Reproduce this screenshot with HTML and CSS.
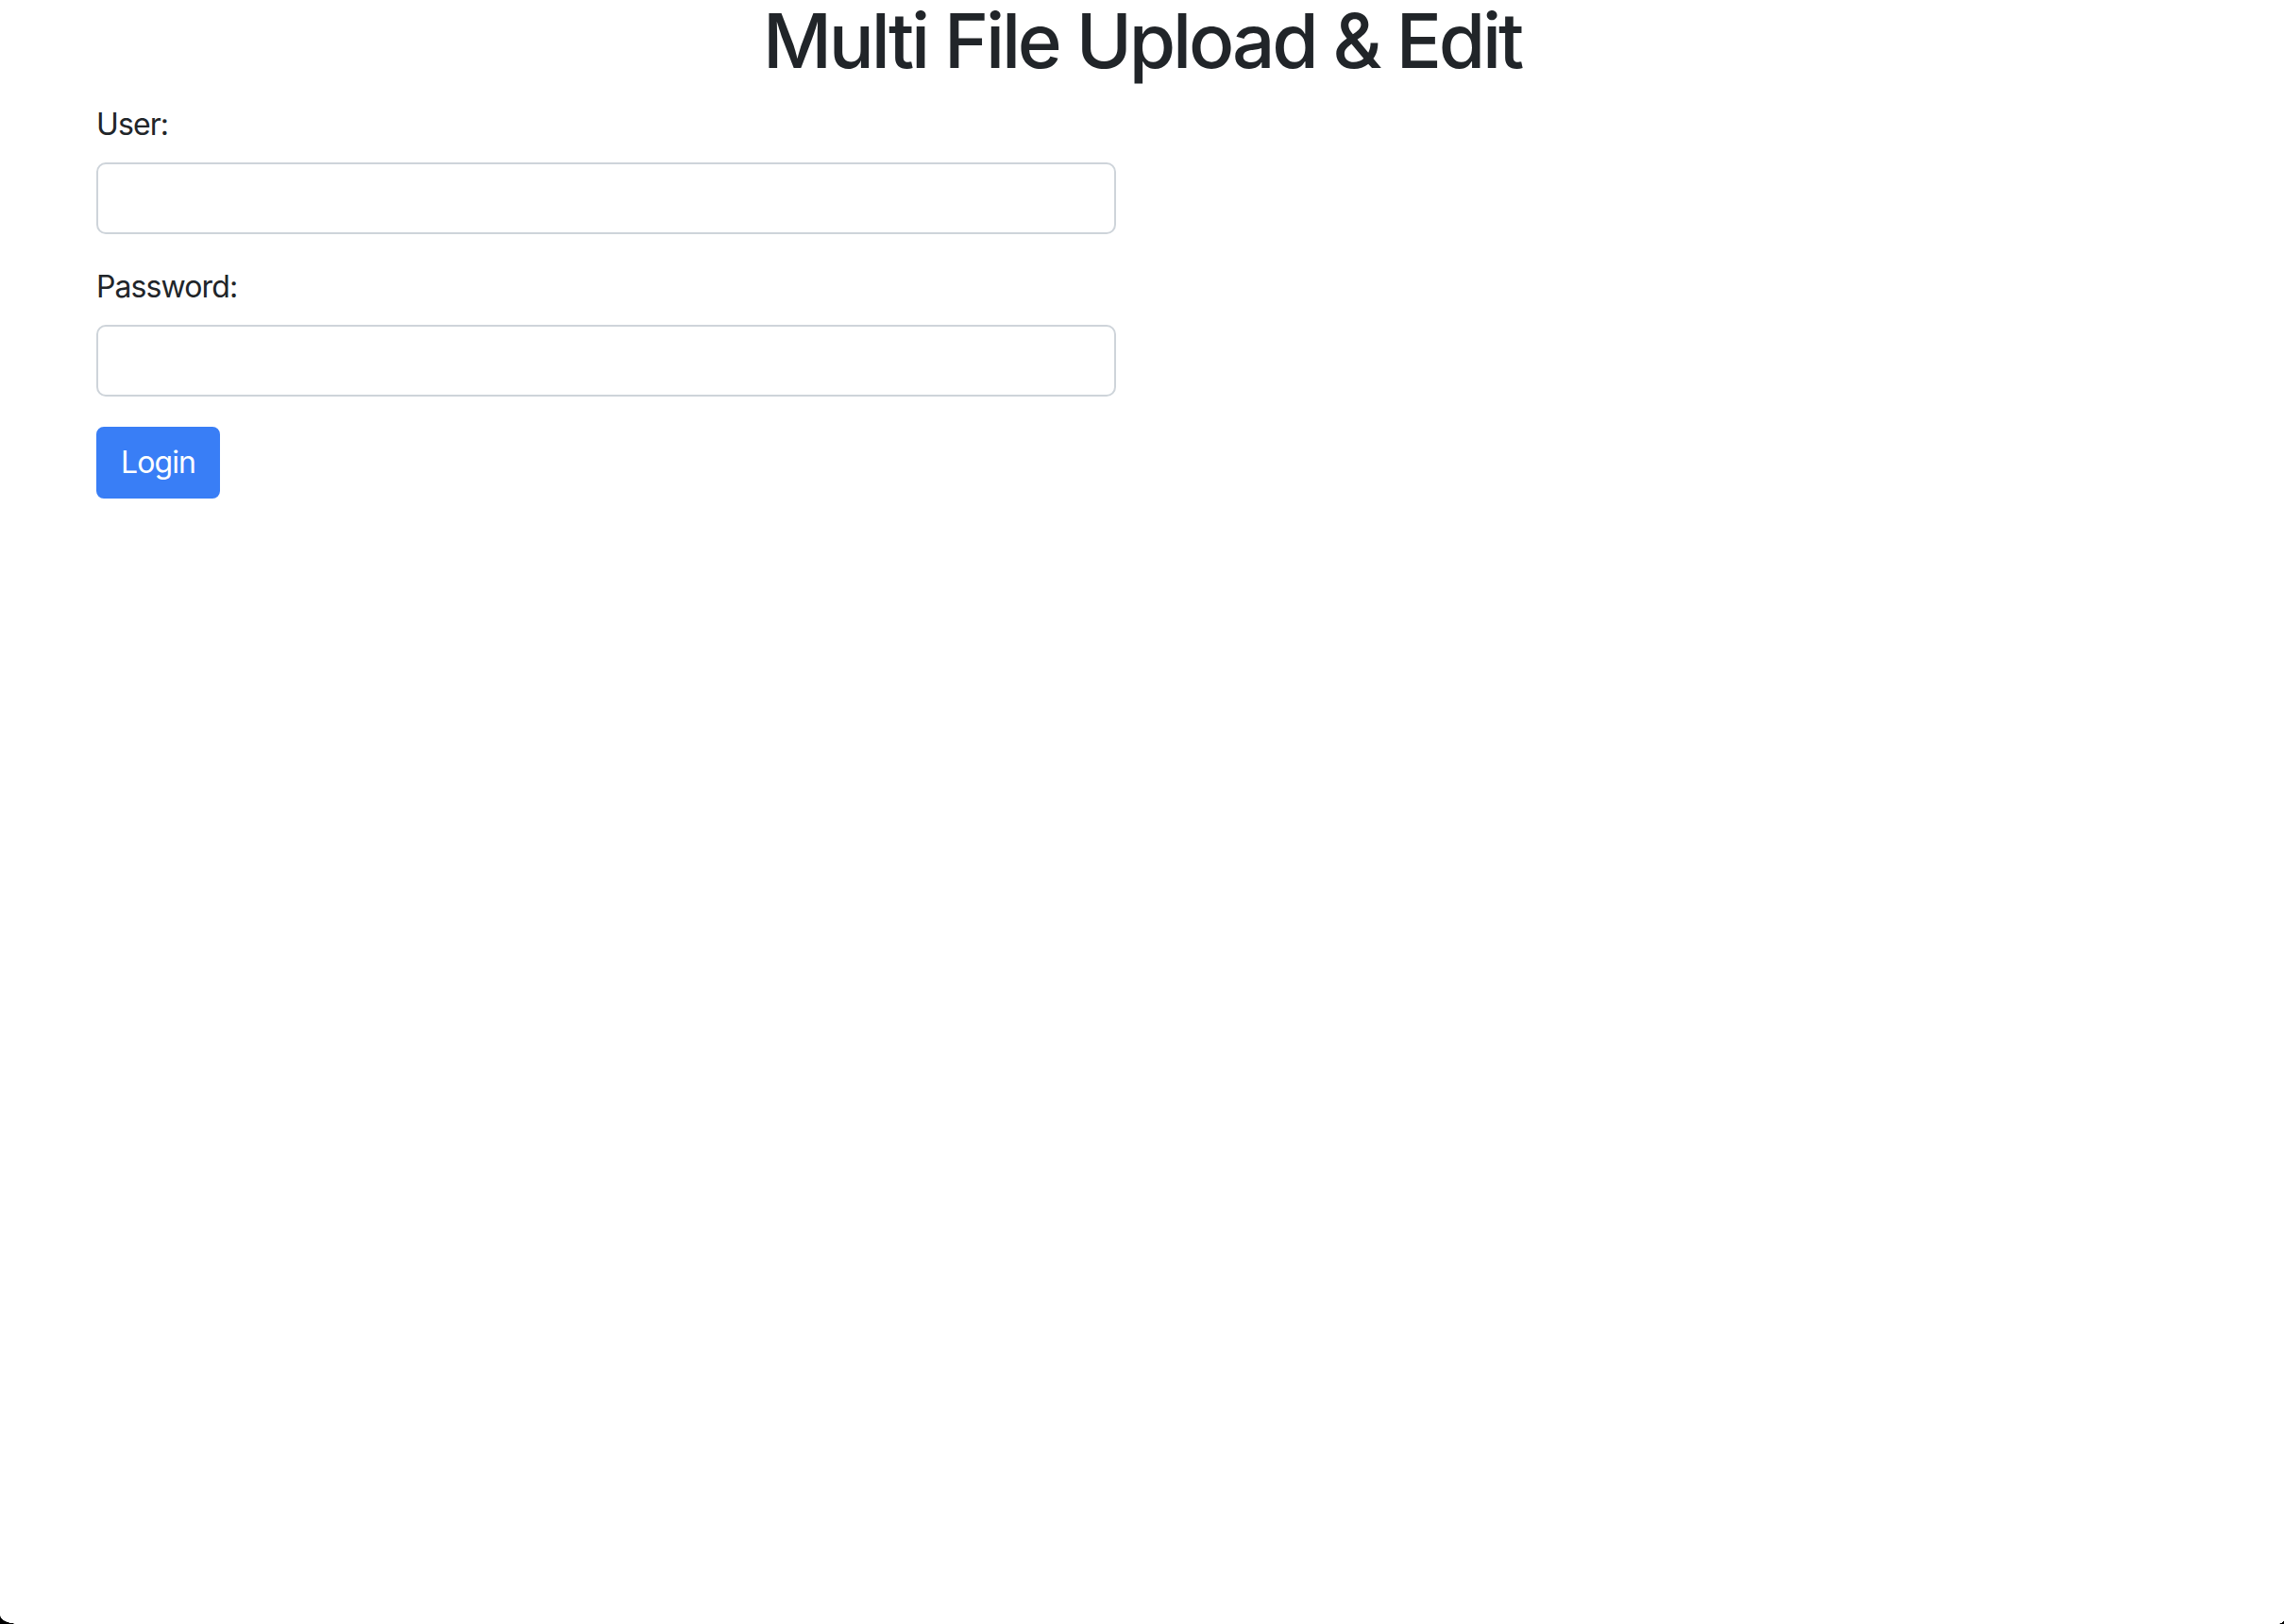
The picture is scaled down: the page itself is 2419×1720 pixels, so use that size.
FILE: index.html
```html
<!DOCTYPE html>
<html lang="en">
<head>
  <meta charset="UTF-8" />
  <meta name="viewport" content="width=device-width, initial-scale=1.0"/>
  <title>Multi File Upload &amp; Edit</title>
  <link rel="stylesheet" href="styles.css">
</head>
<body>
  <h1>Multi File Upload &amp; Edit</h1>

  <div class="container">
    <form class="login-form" onsubmit="return false;">
      <div class="form-group">
        <label for="user">User:</label>
        <input type="text" id="user" name="user" class="form-control">
      </div>
      <div class="form-group">
        <label for="password">Password:</label>
        <input type="password" id="password" name="password" class="form-control">
      </div>
      <button type="submit" class="btn-login">Login</button>
    </form>
  </div>
</body>
</html>
```

FILE: styles.css
```css
body {
  margin: 0;
  font-family: Inter, "Noto Sans", sans-serif;
  font-size: 32px;
  line-height: 1.5;
  letter-spacing: -0.9px;
  color: #212529;
  background-color: #fff;
}

/* window corners of the screenshot */
body::before,
body::after {
  content: "";
  position: fixed;
  bottom: 0;
}

body::before {
  left: 0;
  width: 20px;
  height: 9px;
  background: radial-gradient(20px 9px at 100% 0, transparent 97%, #000 100%);
}

body::after {
  right: 0;
  width: 8px;
  height: 4px;
  background: radial-gradient(8px 4px at 0 0, transparent 97%, #000 100%);
}

h1 {
  margin: 0 0 22px 0;
  text-align: center;
  font-size: 80px;
  font-weight: 500;
  line-height: 86px;
  letter-spacing: -3.2px;
}

.container {
  padding-left: 102px;
}

.login-form {
  width: 1080px;
}

.form-group {
  margin-bottom: 32px;
}

label {
  display: block;
  margin-bottom: 16px;
}

.form-control {
  display: block;
  box-sizing: border-box;
  width: 100%;
  height: 76px;
  padding: 12px 24px;
  font-family: inherit;
  font-size: 32px;
  color: #495057;
  background-color: #fff;
  border: 2px solid #ced4da;
  border-radius: 10px;
  outline: none;
}

.btn-login {
  box-sizing: border-box;
  height: 76px;
  padding: 12px 24px;
  font-family: inherit;
  font-size: 32px;
  line-height: 48px;
  letter-spacing: -0.9px;
  color: #fff;
  background-color: #397ef6;
  border: 2px solid #397ef6;
  border-radius: 8px;
  cursor: pointer;
}
```
